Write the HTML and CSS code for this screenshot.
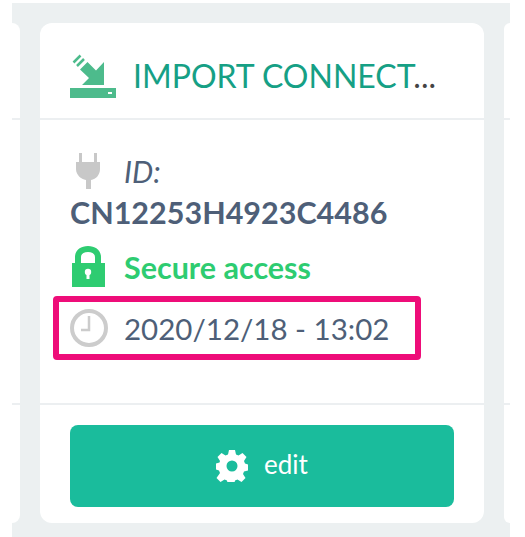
FILE: index.html
```html
<!DOCTYPE html>
<html lang="en">
<head>
<meta charset="utf-8">
<title>Import connection</title>
<link rel="stylesheet" href="styles.css">
</head>
<body>
<div class="board">
  <div class="card side side-left"><div class="head"></div><div class="body"></div><div class="foot"></div></div>
  <article class="card main">
    <header class="head">
      <svg class="icon-import" viewBox="0 0 46 44" aria-hidden="true">
        <path fill="#4dbb8c" d="M0 34h46v10H0z"/>
        <path fill="#fff" d="M38 38h4v2h-4z"/>
        <path fill="#4dbb8c" d="M34 8v23H12l7-7-9-8.500L17.500 8l8.500 8.500z"/>
        <path fill="none" stroke="#4dbb8c" stroke-width="2.500" d="M3.500 8.500l7-7M7 12l7-7"/>
      </svg>
      <h1 class="title"><span class="title-text">IMPORT CONNECT</span><span class="ellipsis">...</span></h1>
    </header>
    <div class="body">
      <div class="row-id">
        <svg class="icon-plug" viewBox="0 0 24 36" aria-hidden="true">
          <path fill="#c8c8c8" d="M3 0h3v9h12V0h3v9h3v7c0 6-4 10-9 11v9h-5v-9C5 26 0 22 0 16V9h3z"/>
        </svg>
        <span class="id-label">ID:</span>
      </div>
      <div class="id-value">CN12253H4923C4486</div>
      <div class="row-secure">
        <svg class="icon-lock" viewBox="0 0 33 41" aria-hidden="true">
          <path fill="#2ecc71" fill-rule="evenodd" d="M3 17v-6C3 4 9 0 16 0s13 4 13 11v6h4v24H0V17zM9 17h14v-6c0-3-3-5-7-5s-7 2-7 5z"/>
          <circle cx="16" cy="26" r="3.200" fill="#fff"/>
          <path fill="#fff" d="M14.500 27h3v6h-3z"/>
        </svg>
        <span class="secure-text">Secure access</span>
      </div>
      <div class="row-date">
        <svg class="icon-clock" viewBox="0 0 38 38" aria-hidden="true">
          <circle cx="19" cy="19" r="17" fill="none" stroke="#cccccc" stroke-width="4"/>
          <path fill="none" stroke="#cccccc" stroke-width="2.500" d="M19 7v14h-8"/>
        </svg>
        <span class="date-text">2020/12/18 - 13:02</span>
      </div>
    </div>
    <footer class="foot">
      <button class="edit" type="button">
        <svg class="icon-gear" viewBox="0 0 32 32" aria-hidden="true">
          <path fill="#fff" fill-rule="evenodd" d="M13 0h6l1 4.500 2.500 1L26.500 3l4 4-2.500 4 1 2.500 3 1v6l-4 1-1 2.500 2.500 4-4 4-4-2.500-2.500 1-1 4.500h-6l-1-4.500-2.500-1-4 2.500-4-4L4 23l-1-2.500-3-1v-6l3.500-1L4 11 1.500 7l4-4 4 2.500 2.500-1zM16 10.500a5.500 5.500 0 1 0 0 11 5.500 5.500 0 0 0 0-11z"/>
        </svg>
        <span class="edit-text">edit</span>
      </button>
    </footer>
  </article>
  <div class="card side side-right"><div class="head"></div><div class="body"></div><div class="foot"></div></div>
</div>
</body>
</html>
```
FILE: styles.css
```css
* { box-sizing: border-box; }
html, body { margin: 0; padding: 0; background: #fff; }
body { width: 525px; height: 537px; overflow: hidden; font-family: "Lato", "Liberation Sans", sans-serif; }
.board {
  width: 498px; height: 534px; margin: 3px 0 0 12px;
  background: #ecf0f1;
  display: flex; gap: 20px; padding: 20px 0 14px;
}
.card { background: #fff; display: flex; flex-direction: column; }
.side { flex: 0 0 auto; }
.side-left { width: 8px; border-radius: 0 12px 12px 0; }
.side-right { width: 6px; border-radius: 12px 0 0 12px; }
.main { flex: 0 0 444px; border-radius: 12px; }
.head { flex: none; height: 97px; border-bottom: 2px solid #eceff1; }
.body { flex: none; height: 285px; border-bottom: 2px solid #eceff1; }
.foot { flex: 1; }
.main .head { display: flex; align-items: flex-start; padding: 31px 30px 0; }
.main .body { padding: 0 30px; }
.main .foot { padding: 20px 30px 0; }
.icon-import { width: 46px; height: 44px; flex: none; }
.title { margin: 0 0 0 17px; font-size: 32px; line-height: 44px; font-weight: 400; color: #16a085; white-space: nowrap; }
.ellipsis { color: #444; }
.row-id { display: flex; align-items: flex-start; height: 40px; margin-top: 33px; padding-left: 6px; }
.icon-plug { width: 24px; height: 36px; flex: none; }
.id-label { margin-left: 24px; font-size: 30px; line-height: 36px; font-style: italic; color: #4e5f78; }
.id-value { font-size: 30.500px; line-height: 38px; font-weight: 700; color: #4e5f78; height: 38px; }
.row-secure { display: flex; align-items: center; height: 41px; margin-top: 15px; padding-left: 2px; }
.icon-lock { width: 33px; height: 41px; flex: none; }
.secure-text { margin-left: 19px; font-size: 30.500px; line-height: 46px; font-weight: 700; color: #2ecc71; }
.row-date {
  display: flex; align-items: center; height: 64px; width: 368px;
  margin: 9px 0 0 -17px; padding-left: 11px;
  border: 6px solid #ee0d79; border-radius: 4px;
}
.icon-clock { width: 38px; height: 38px; flex: none; }
.date-text { margin-left: 16px; font-size: 29.500px; color: #4e5f78; }
.edit {
  width: 384px; height: 82px; border: 0; border-radius: 8px;
  background: #1abc9c; color: #fff; font-family: inherit; font-size: 26px;
  display: flex; align-items: center; justify-content: center; gap: 16px; padding: 0;
}
.edit-text { line-height: 26px; margin-bottom: 4px; }
.icon-gear { width: 32px; height: 32px; flex: none; }
```
